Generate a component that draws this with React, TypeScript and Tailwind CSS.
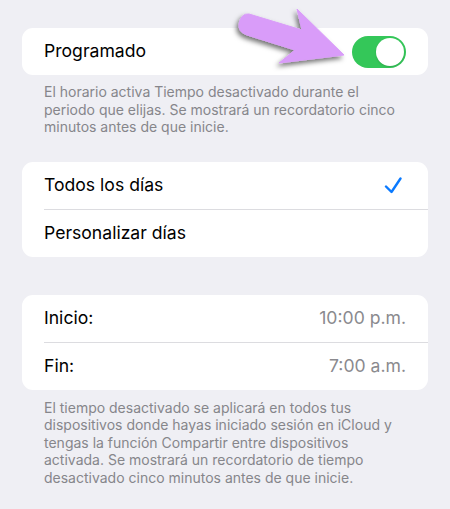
import React from "react";

const font = { fontFamily: "Inter, 'Noto Sans', 'Liberation Sans', sans-serif" };

function Arrow() {
  return (
    <svg
      className="absolute left-0 top-0 pointer-events-none"
      width="450"
      height="100"
      viewBox="0 0 450 100"
    >
      <defs>
        <filter id="sh" x="-20%" y="-20%" width="140%" height="160%">
          <feDropShadow dx="-2" dy="3" stdDeviation="2.5" floodColor="#000" floodOpacity="0.55" />
        </filter>
      </defs>
      <path
        d="M249 14 L302 30 L297 9 L344 55 L279 63 L295 50 L247 35 Q238 32 239 24 Q241 13 249 14 Z"
        fill="#d99cf9"
        stroke="#d99cf9"
        strokeWidth="1"
        strokeLinejoin="round"
        filter="url(#sh)"
      />
    </svg>
  );
}

function Toggle() {
  return (
    <div className="relative w-[54px] h-[32px] rounded-full bg-[#34c759]">
      <div className="absolute right-[2px] top-[2px] w-[28px] h-[28px] rounded-full bg-white shadow-[0_1px_2px_rgba(0,0,0,0.15)]" />
    </div>
  );
}

function Check() {
  return (
    <svg width="18" height="17" viewBox="0 0 18 17" fill="none">
      <path d="M2 9.5 L7.5 15 L16.5 1.5" stroke="#0a7aff" strokeWidth="2.4" strokeLinecap="round" strokeLinejoin="round" />
    </svg>
  );
}

export default function App() {
  return (
    <div className="relative w-[450px] h-[509px] overflow-hidden bg-[#efeff4]" style={font}>
      <div className="px-[22px] pt-[28px]">
        {/* Card 1 */}
        <div className="h-[47px] rounded-[11px] bg-white flex items-center justify-between pl-[22px] pr-[22px]">
          <span className="text-[17.6px] text-black">Programado</span>
          <Toggle />
        </div>
        <div className="mt-[8px] pl-[22px] text-[14px] leading-[17.5px] text-[#86868b]">
          <div className="whitespace-nowrap">El horario activa Tiempo desactivado durante el</div>
          <div className="whitespace-nowrap">periodo que elijas. Se mostrará un recordatorio cinco</div>
          <div className="whitespace-nowrap">minutos antes de que inicie.</div>
        </div>

        {/* Card 2 */}
        <div className="mt-[26px] rounded-[11px] bg-white">
          <div className="h-[47px] flex items-center justify-between pl-[22px] pr-[26px]">
            <span className="text-[17.6px] text-black">Todos los días</span>
            <Check />
          </div>
          <div className="ml-[22px] h-px bg-[#dcdce0]" />
          <div className="h-[47px] flex items-center pl-[22px]">
            <span className="text-[17.6px] text-black">Personalizar días</span>
          </div>
        </div>

        {/* Card 3 */}
        <div className="mt-[38px] rounded-[11px] bg-white">
          <div className="h-[47px] flex items-center justify-between pl-[22px] pr-[22px]">
            <span className="text-[17.6px] text-black">Inicio:</span>
            <span className="text-[17.6px] text-[#8a8a8e]">10:00 p.m.</span>
          </div>
          <div className="ml-[22px] h-px bg-[#dcdce0]" />
          <div className="h-[47px] flex items-center justify-between pl-[22px] pr-[22px]">
            <span className="text-[17.6px] text-black">Fin:</span>
            <span className="text-[17.6px] text-[#8a8a8e]">7:00 a.m.</span>
          </div>
        </div>
        <div className="mt-[9px] pl-[22px] text-[14px] leading-[17.5px] text-[#86868b]">
          <div className="whitespace-nowrap">El tiempo desactivado se aplicará en todos tus</div>
          <div className="whitespace-nowrap">dispositivos donde hayas iniciado sesión en iCloud y</div>
          <div className="whitespace-nowrap">tengas la función Compartir entre dispositivos</div>
          <div className="whitespace-nowrap">activada. Se mostrará un recordatorio de tiempo</div>
          <div className="whitespace-nowrap">desactivado cinco minutos antes de que inicie.</div>
        </div>
      </div>
      <Arrow />
    </div>
  );
}
